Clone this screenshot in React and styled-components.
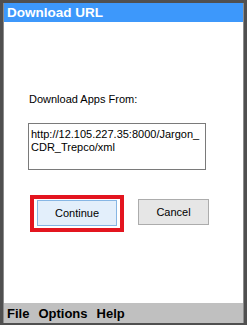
import styled, { createGlobalStyle } from "styled-components";

const GlobalStyle = createGlobalStyle`
    html, body {
        margin: 0;
        padding: 0;
        background: #ffffff;
    }
    * {
        box-sizing: border-box;
    }
`;

/* 바깥 창 프레임 */
const Frame = styled.div`
    display: flex;
    flex-direction: column;
    width: 247px;
    height: 325px;
    border: 3px solid #505050;
    border-bottom-width: 2px;
    box-shadow: inset 1px 0 0 #8c8c8c, inset -1px 0 0 #8c8c8c;
    background: #ffffff;
    font-family: "Liberation Sans", Arial, sans-serif;
`;

const TitleBar = styled.div`
    height: 19px;
    margin: 0 1px;
    padding-left: 3px;
    display: flex;
    align-items: center;
    background: #3d98fb;
    color: #ffffff;
    font-weight: bold;
    font-size: 13.5px;
`;

const Body = styled.div`
    flex: 1;
    margin: 0 1px;
    padding: 70px 0 0 25px;
    display: flex;
    flex-direction: column;
`;

const Label = styled.div`
    font-size: 11px;
    line-height: 14px;
    color: #000000;
`;

const UrlBox = styled.div`
    width: 178px;
    height: 47px;
    margin: 17px 0 0 -1px;
    padding: 4px 2px 0 2px;
    border: 1px solid #7a7a7a;
    font-size: 11px;
    line-height: 13px;
    color: #000000;
    word-break: break-all;
`;

const ButtonRow = styled.div`
    display: flex;
    align-items: flex-start;
    gap: 14px;
    margin: 25px 0 0 1px;
`;

/* 강조 표시용 빨간 테두리 */
const Highlight = styled.div`
    border: 4px solid #e3151f;
    padding: 1px 3px 2px 3px;
    background: #ffffff;
`;

const Button = styled.button`
    width: ${props => props.width || "71px"};
    height: 26px;
    padding: 0;
    font-family: "Liberation Sans", Arial, sans-serif;
    font-size: 11px;
    color: #000000;
    border: 1px solid ${props => (props.primary ? "#86b6e4" : "#acacac")};
    background: ${props => (props.primary ? "#e3effb" : "#e6e6e6")};
    margin-top: ${props => props.marginTop || "0"};
`;

const MenuBar = styled.div`
    height: 20px;
    margin: 0 1px;
    padding-left: 3px;
    display: flex;
    align-items: center;
    gap: 9px;
    background: #c0c0c0;
    font-weight: bold;
    font-size: 13px;
    color: #000000;
`;

function App() {
    return (
        <>
            <GlobalStyle />
            <Frame>
                <TitleBar>Download URL</TitleBar>

                <Body>
                    <Label>Download Apps From:</Label>
                    <UrlBox>http://12.105.227.35:8000/Jargon_CDR_Trepco/xml</UrlBox>

                    <ButtonRow>
                        <Highlight>
                            <Button primary width="80px">Continue</Button>
                        </Highlight>
                        <Button width="71px" marginTop="4px">Cancel</Button>
                    </ButtonRow>
                </Body>

                <MenuBar>
                    <span>File</span>
                    <span>Options</span>
                    <span>Help</span>
                </MenuBar>
            </Frame>
        </>
    );
}

export default App;
